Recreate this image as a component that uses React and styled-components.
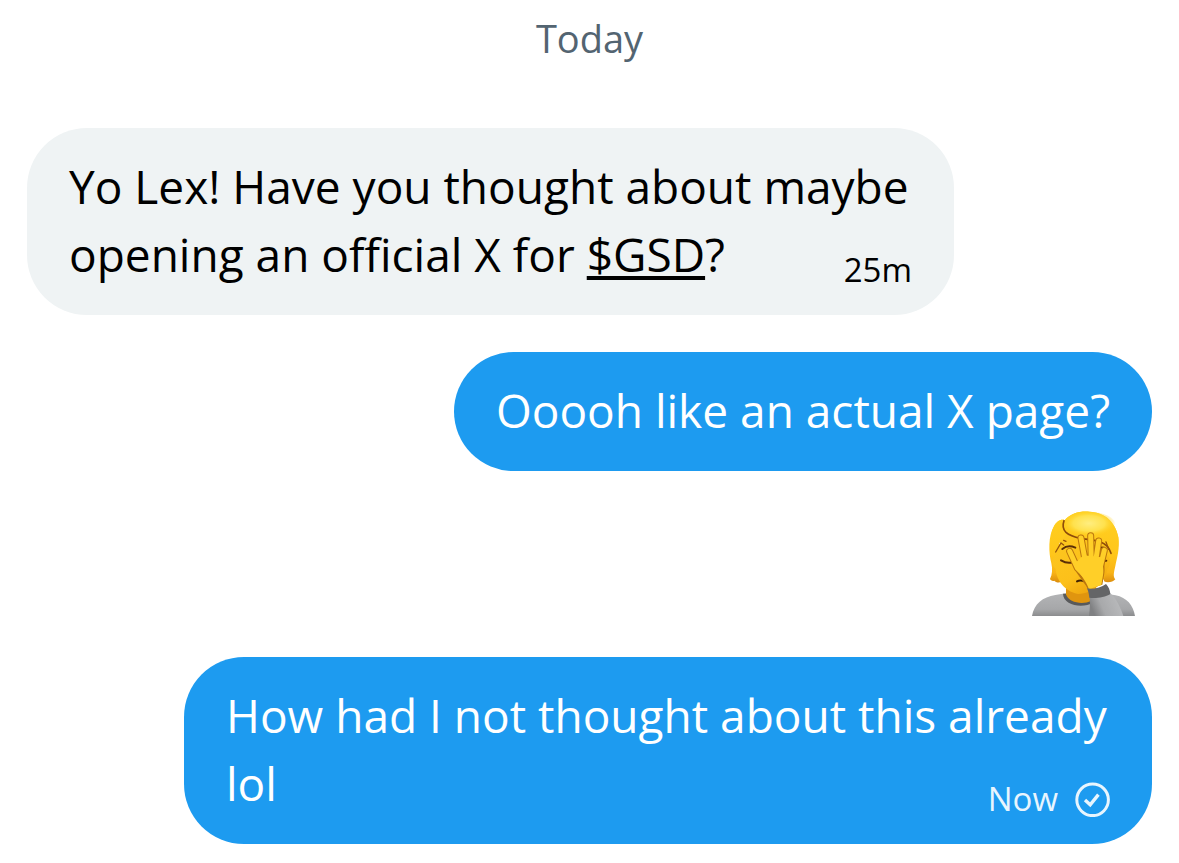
import React from "react";
import styled, { createGlobalStyle } from "styled-components";

const GlobalStyle = createGlobalStyle`
  body {
    margin: 0;
    background: #ffffff;
    font-family: "Open Sans", "Noto Sans", sans-serif;
  }
`;
const Chat = styled.main`
  display: flex;
  flex-direction: column;
  padding: 12px 27px 18px;
`;
const DateLabel = styled.h2`
  margin: 0 0 64px;
  text-align: center;
  font-size: 38px;
  font-weight: 400;
  line-height: 52px;
  color: #536471;
`;
const MessageList = styled.ul`
  display: flex;
  flex-direction: column;
  gap: 37px;
  margin: 0;
  padding: 0;
  list-style: none;
`;
const MessageRow = styled.li`
  display: flex;
  justify-content: ${(props) => (props.$sent ? "flex-end" : "flex-start")};
  padding-left: ${(props) => (props.$sent ? "157px" : "0")};
  padding-right: ${(props) => (props.$sent ? "0" : "198px")};
`;
const Bubble = styled.div`
  padding: 24px 42px 27px;
  border-radius: 60px;
  font-size: 46px;
  line-height: 68px;
  color: ${(props) => (props.$sent ? "#ffffff" : "#000000")};
  background-color: ${(props) => (props.$sent ? "#1d9bf0" : "#eff3f4")};
`;
const BubbleText = styled.p`
  display: flow-root;
  margin: 0;
`;
const Cashtag = styled.a`
  color: inherit;
  text-decoration: underline;
  text-decoration-thickness: 4px;
  text-decoration-skip-ink: none;
  text-underline-offset: 4px;
`;
// floats at the end of the last line, drops below it when there is no room
const Meta = styled.span`
  float: right;
  display: flex;
  align-items: center;
  gap: 16px;
  margin-top: 32px;
  font-size: 33px;
  line-height: 36px;
  color: ${(props) => (props.$sent ? "#e8f5fe" : "inherit")};
`;
const StatusIcon = styled.svg`
  width: 36px;
  height: 36px;
`;
const EmojiMessage = styled.div`
  display: flex;
  padding: 3px 17px 4px;
`;
const EmojiIcon = styled.svg`
  width: 103px;
  height: 105px;
`;

const SentIcon = () => (
  <StatusIcon viewBox="0 0 36 36" fill="none" role="img" aria-label="Sent">
    <circle cx="18.6" cy="18.8" r="15.8" stroke="currentColor" strokeWidth="3" />
    <path d="M11 19l5.2 4.8 8.2-10.2" stroke="currentColor" strokeWidth="3.4" />
  </StatusIcon>
);

const fingers =
  "M183 114L197 190M212 107L214 190M236 123L226 190M253 151L240 205M149 154L172 204L200 232";

const Facepalm = () => (
  <EmojiIcon viewBox="36 33 309 315" role="img" aria-label="Person facepalming">
    <defs>
      <linearGradient
        id="hair"
        gradientUnits="userSpaceOnUse"
        x1="0"
        y1="35"
        x2="0"
        y2="250"
      >
        <stop offset="0" stopColor="#ffd021" />
        <stop offset="0.6" stopColor="#ffc61a" />
        <stop offset="0.85" stopColor="#f9b416" />
        <stop offset="1" stopColor="#d98a0e" />
      </linearGradient>
      <radialGradient id="shine" cx="0.5" cy="0.45" r="0.5">
        <stop offset="0" stopColor="#ffee80" />
        <stop offset="0.6" stopColor="#ffe14d" />
        <stop offset="1" stopColor="#ffd021" stopOpacity="0" />
      </radialGradient>
      <linearGradient id="skin" x1="0" y1="0" x2="0.6" y2="1">
        <stop offset="0" stopColor="#fdc820" />
        <stop offset="0.7" stopColor="#fcc01a" />
        <stop offset="1" stopColor="#efa60f" />
      </linearGradient>
      <linearGradient id="shirt" x1="0" y1="0" x2="0" y2="1">
        <stop offset="0" stopColor="#b3b4b6" />
        <stop offset="0.7" stopColor="#a6a7a9" />
        <stop offset="1" stopColor="#8b8c8e" />
      </linearGradient>
      <linearGradient id="sleeve" x1="0" y1="0.4" x2="1" y2="0.1">
        <stop offset="0" stopColor="#808183" />
        <stop offset="0.3" stopColor="#a8a9ab" />
        <stop offset="0.75" stopColor="#b6b7b9" />
        <stop offset="1" stopColor="#939496" />
      </linearGradient>
    </defs>
    <path
      d="M36 348C42 312 68 291 106 285L137 280L250 280L287 286C320 293 340 315 345 348Z"
      fill="url(#shirt)"
    />
    <path d="M129 281C130 329 234 329 238 281Z" fill="#58595b" />
    <path d="M138 258L138 283C147 317 222 317 228 285L228 250Z" fill="#e0950f" />
    <path
      d="M134 61C153 39 179 33 208 35C255 37 287 67 295 112C300 145 291 174 286 198C282 217 278 229 286 238C279 246 263 250 252 244L248 120L118 128L124 246C115 249 107 247 103 242C97 244 92 241 90 237C97 224 98 207 94 190C86 158 84 109 102 79C110 65 122 56 134 61Z"
      fill="url(#hair)"
    />
    <path
      d="M101 172C94 181 98 202 107 206C108 232 126 271 174 282C224 282 260 239 262 207C273 194 273 175 262 168L251 116C218 121 172 116 142 97C129 121 116 128 112 152Z"
      fill="url(#skin)"
    />
    <path
      d="M134 61C153 39 179 33 208 35C255 37 287 67 295 112C297 139 292 158 284 176C276 140 251 122 220 121C183 121 151 110 137 91C126 105 124 122 114 136C106 147 106 163 102 177C93 160 86 105 102 79C110 65 122 56 134 61Z"
      fill="url(#hair)"
    />
    <ellipse cx="207" cy="74" rx="80" ry="39" fill="url(#shine)" />
    <path
      d="M132 62C127 76 129 88 138 97C149 107 162 111 182 115C208 119 226 120 240 125C257 131 268 143 273 160"
      fill="none"
      stroke="#8d4b0a"
      strokeWidth="5"
      strokeLinecap="round"
    />
    <path
      d="M107 156L123 129L131 135M131 121L138 124M258 126L266 148"
      fill="none"
      stroke="#96530b"
      strokeWidth="4"
      strokeLinecap="round"
    />
    <path
      d="M127 147C139 137 152 137 166 143M123 181C136 189 150 190 161 186M222 141L252 143M251 183L259 182"
      fill="none"
      stroke="#5c2f06"
      strokeWidth="6"
      strokeLinecap="round"
    />
    <path
      d="M171 244C178 240 188 241 198 246"
      fill="none"
      stroke="#3f2105"
      strokeWidth="6"
      strokeLinecap="round"
    />
    <path
      d={fingers}
      fill="none"
      stroke="#bb760e"
      strokeWidth="21"
      strokeLinecap="round"
      strokeLinejoin="round"
    />
    <path
      d="M158 188C166 222 190 240 203 266L247 254L252 226C257 206 250 182 252 165"
      fill="#bb760e"
    />
    <path
      d={fingers}
      fill="none"
      stroke="#ffcf28"
      strokeWidth="15"
      strokeLinecap="round"
      strokeLinejoin="round"
    />
    <path
      d="M165 190C176 222 198 240 207 268L244 255L249 226C253 206 246 190 244 172L190 166Z"
      fill="#ffcf28"
    />
    <path
      d="M208 286C225 292 252 288 270 279C287 292 303 323 310 348L207 348C210 326 211 306 208 286Z"
      fill="url(#sleeve)"
    />
    <path
      d="M201 265C218 269 243 263 258 252C266 260 270 271 271 282C255 292 226 296 208 293C207 283 205 274 201 265Z"
      fill="#646567"
    />
  </EmojiIcon>
);

const App = () => {
  return (
    <>
      <GlobalStyle />
      <Chat>
        <DateLabel>Today</DateLabel>
        <MessageList>
          <MessageRow>
            <Bubble>
              <BubbleText>
                Yo Lex! Have you thought about maybe opening an official X for{" "}
                <Cashtag href="#gsd">$GSD</Cashtag>?<Meta>25m</Meta>
              </BubbleText>
            </Bubble>
          </MessageRow>
          <MessageRow $sent>
            <Bubble $sent>
              <BubbleText>Ooooh like an actual X page?</BubbleText>
            </Bubble>
          </MessageRow>
          <MessageRow $sent>
            <EmojiMessage>
              <Facepalm />
            </EmojiMessage>
          </MessageRow>
          <MessageRow $sent>
            <Bubble $sent>
              <BubbleText>
                How had I not thought about this already lol
                <Meta $sent>
                  Now
                  <SentIcon />
                </Meta>
              </BubbleText>
            </Bubble>
          </MessageRow>
        </MessageList>
      </Chat>
    </>
  );
};

export default App;
